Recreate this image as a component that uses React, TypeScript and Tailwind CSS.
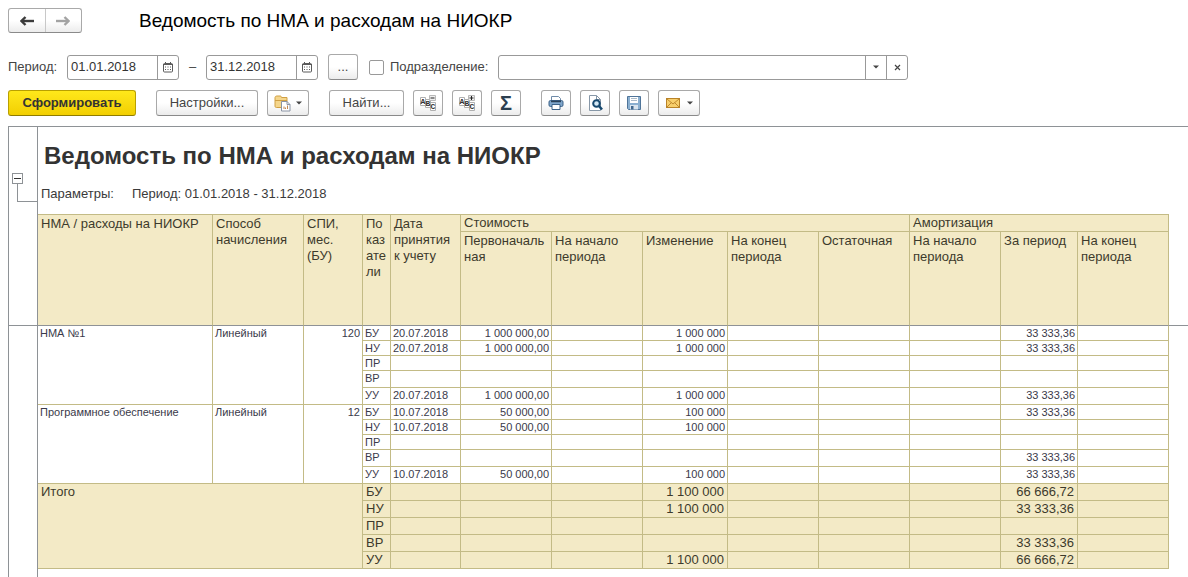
import type { ReactNode } from 'react';
import clsx from 'clsx';

type ReportRow = {
  code: string;
  date?: string;
  initial?: string;
  change?: string;
  period?: string;
};

type ReportGroup = {
  name: string;
  method: string;
  months: string;
  rows: ReportRow[];
};

const GROUPS: ReportGroup[] = [
  {
    name: 'НМА №1',
    method: 'Линейный',
    months: '120',
    rows: [
      { code: 'БУ', date: '20.07.2018', initial: '1 000 000,00', change: '1 000 000', period: '33 333,36' },
      { code: 'НУ', date: '20.07.2018', initial: '1 000 000,00', change: '1 000 000', period: '33 333,36' },
      { code: 'ПР' },
      { code: 'ВР' },
      { code: 'УУ', date: '20.07.2018', initial: '1 000 000,00', change: '1 000 000', period: '33 333,36' },
    ],
  },
  {
    name: 'Программное обеспечение',
    method: 'Линейный',
    months: '12',
    rows: [
      { code: 'БУ', date: '10.07.2018', initial: '50 000,00', change: '100 000', period: '33 333,36' },
      { code: 'НУ', date: '10.07.2018', initial: '50 000,00', change: '100 000' },
      { code: 'ПР' },
      { code: 'ВР', period: '33 333,36' },
      { code: 'УУ', date: '10.07.2018', initial: '50 000,00', change: '100 000', period: '33 333,36' },
    ],
  },
];

const TOTALS: ReportRow[] = [
  { code: 'БУ', change: '1 100 000', period: '66 666,72' },
  { code: 'НУ', change: '1 100 000', period: '33 333,36' },
  { code: 'ПР' },
  { code: 'ВР', period: '33 333,36' },
  { code: 'УУ', change: '1 100 000', period: '66 666,72' },
];

const CELL = 'border-r border-b border-[#c3bb86] px-0.5 align-top font-normal';
const HEAD = 'border-r border-b border-[#c3bb86] bg-[#f3eac6] px-[3px] align-top text-left font-normal';
const HEAD_LAST = 'border-b-[#8e9296] pt-px';
const GUTTER = 'border-r border-[#8e9296]';

function ToolButton({ label, className, children }: { label?: string; className?: string; children: ReactNode }) {
  return (
    <button
      type="button"
      aria-label={label}
      className={clsx(
        'flex h-[26px] shrink-0 items-center justify-center rounded-[3px] border border-[#a9a9a9] border-b-[#8a8a8a] bg-linear-to-b from-white from-50% to-[#ececec] text-[#444]',
        className,
      )}
    >
      {children}
    </button>
  );
}

function Caret() {
  return (
    <svg width="6" height="4" viewBox="0 0 6 4" fill="#444">
      <path d="M0 .5h6L3 3.5z" />
    </svg>
  );
}

function Arrow({ color, flip }: { color: string; flip?: boolean }) {
  return (
    <svg width="14" height="10" viewBox="0 0 14 10" className={clsx(flip && 'rotate-180')} fill="none" stroke={color}>
      <path d="M2 5h12" strokeWidth="2.4" />
      <path d="M5.5 1L1.5 5l4 4" strokeWidth="2.4" />
    </svg>
  );
}

function CalendarIcon() {
  return (
    <svg width="10" height="11" viewBox="0 0 10 11" fill="none" stroke="#5a5a5a">
      <rect x=".5" y="1.5" width="9" height="8.5" rx="1" />
      <path d="M0 2.5h10M2.5 0v2M7.5 0v2" />
      <path d="M2 5h1M4.500 5h1M7 5h1M2 7.500h1M4.500 7.500h1M7 7.500h1" strokeWidth="1.200" />
    </svg>
  );
}

function DateField({ label, value }: { label: string; value: string }) {
  return (
    <div className="flex h-[25px] w-28 rounded-[3px] border border-[#999] bg-white">
      <input
        aria-label={label}
        defaultValue={value}
        className="min-w-0 flex-1 pl-[3px] text-[13px] text-[#333] outline-none"
      />
      <button type="button" aria-label="Календарь" className="flex w-[21px] items-center justify-center border-l border-[#999]">
        <CalendarIcon />
      </button>
    </div>
  );
}

function VariantsIcon() {
  return (
    <svg width="17" height="17" viewBox="0 0 17 17" fill="none">
      <path d="M1 2.500c0-1 1-1.500 2-1.500h3c1 0 1.500.7 1.500 1.500H13v10H2.500c-1 0-1.500-.5-1.500-1.500z" fill="#f5d68c" stroke="#d0a044" />
      <path d="M1 5.500h12" stroke="#d0a044" />
      <path d="M7.500 6.500h5.500l3 3v6.500h-8.500z" fill="#fff" stroke="#8a93a3" />
      <path d="M13 6.500v3h3" stroke="#8a93a3" />
      <path d="M10 14v-2.500M11.500 14v-1.500M13.500 14v-3.500" stroke="#c2864e" />
    </svg>
  );
}

function AbcIcon({ plus }: { plus?: boolean }) {
  return (
    <svg width="16" height="16" viewBox="0 0 16 16" fill="none">
      <g fill="#fff" stroke="#b0b0b0">
        <path d="M.5 2.500h5v8h-5zM5.500 4.500h5v8h-5zM10.500 7.500h5v8h-5z" />
      </g>
      <g fill="#333" fontFamily="Liberation Mono, monospace" fontSize="8" fontWeight="700" textAnchor="middle">
        <text x="3" y="9">A</text>
        <text x="8" y="11">B</text>
        <text x="13" y="14">C</text>
      </g>
      <path d="M9.500.5h6v5h-6z" fill="#eee" stroke="#b8b8b8" />
      <path d={plus ? 'M10.500 3h4M12.500 1v4' : 'M10.500 3h4'} stroke="#222" />
    </svg>
  );
}

function PrinterIcon() {
  return (
    <svg width="16" height="14" viewBox="0 0 16 14" fill="none">
      <path d="M3.500 5V.5h7l2 2V5" fill="#fff" stroke="#6f8ba8" />
      <rect x="1" y="4.500" width="14" height="6" rx="1.500" fill="#7fa6cb" stroke="#3c6288" />
      <path d="M3 5.500h10" stroke="#2c4258" strokeWidth="1.500" />
      <path d="M4 8.500h8v5H4z" fill="#fff" stroke="#3c6288" />
    </svg>
  );
}

function PreviewIcon() {
  return (
    <svg width="16" height="16" viewBox="0 0 16 16" fill="none">
      <path d="M2.500.5h7l4 4v11h-11z" fill="#fff" stroke="#8797a7" />
      <path d="M9.500.5v4h4" stroke="#8797a7" />
      <circle cx="9.500" cy="8.500" r="3.300" fill="#d6e9f5" stroke="#17496f" strokeWidth="2" />
      <path d="M12 11l3 3.500" stroke="#17496f" strokeWidth="2.500" />
    </svg>
  );
}

function SaveIcon() {
  return (
    <svg width="14" height="14" viewBox="0 0 14 14" fill="none">
      <path d="M.5.5h13v13H1.500l-1-1z" fill="#8aafd0" stroke="#4f7499" />
      <path d="M3 1h8v6H3z" fill="#fff" />
      <path d="M4 2.500h6M4 4.500h6" stroke="#a9b9c8" />
      <path d="M3 9h8v4.500H3z" fill="#d9e4ee" />
      <path d="M4 10h2.500v3.500H4z" fill="#41688e" />
    </svg>
  );
}

function MailIcon() {
  return (
    <svg width="14" height="10" viewBox="0 0 14 10" fill="none" stroke="#b98328">
      <rect x=".5" y=".5" width="13" height="9" fill="#f8cf6c" />
      <path d="M1 1l6 5 6-5M1 9l4.500-4.500M13 9L8.500 4.500" stroke="#c08a2e" />
    </svg>
  );
}

function ValueCells({ row }: { row: ReportRow }) {
  return (
    <>
      <td className={CELL}>{row.code}</td>
      <td className={CELL}>{row.date}</td>
      <td className={clsx(CELL, 'text-right')}>{row.initial}</td>
      <td className={CELL} />
      <td className={clsx(CELL, 'text-right')}>{row.change}</td>
      <td className={CELL} />
      <td className={CELL} />
      <td className={CELL} />
      <td className={clsx(CELL, 'text-right')}>{row.period}</td>
      <td className={CELL} />
    </>
  );
}

function ReportTable() {
  return (
    <table className="w-full table-fixed border-separate border-spacing-0 text-[13px] text-[#3d3a2c]">
      <colgroup>
        <col className="w-[29px]" />
        <col className="w-[175px]" />
        <col className="w-[91px]" />
        <col className="w-[59px]" />
        <col className="w-[28px]" />
        <col className="w-[70px]" />
        <col className="w-[91px]" />
        <col className="w-[91px]" />
        <col className="w-[85px]" />
        <col className="w-[91px]" />
        <col className="w-[91px]" />
        <col className="w-[91px]" />
        <col className="w-[77px]" />
        <col className="w-[91px]" />
        <col />
      </colgroup>
      <thead className="leading-4">
        <tr className="h-[18px]">
          <td rowSpan={2} className={clsx(GUTTER, 'border-b')} />
          <th rowSpan={2} className={clsx(HEAD, HEAD_LAST, 'border-t')}>НМА / расходы на НИОКР</th>
          <th rowSpan={2} className={clsx(HEAD, HEAD_LAST, 'border-t')}>Способ начисления</th>
          <th rowSpan={2} className={clsx(HEAD, HEAD_LAST, 'border-t')}>СПИ, мес. (БУ)</th>
          <th rowSpan={2} className={clsx(HEAD, HEAD_LAST, 'border-t')}>По<br />каз<br />ате<br />ли</th>
          <th rowSpan={2} className={clsx(HEAD, HEAD_LAST, 'border-t')}>Дата принятия к учету</th>
          <th colSpan={5} className={clsx(HEAD, 'border-t')}>Стоимость</th>
          <th colSpan={3} className={clsx(HEAD, 'border-t')}>Амортизация</th>
          <td rowSpan={2} className="border-b border-[#8e9296]" />
        </tr>
        <tr className="h-[94px]">
          <th className={clsx(HEAD, HEAD_LAST)}>Первоначаль<br />ная</th>
          <th className={clsx(HEAD, HEAD_LAST)}>На начало периода</th>
          <th className={clsx(HEAD, HEAD_LAST)}>Изменение</th>
          <th className={clsx(HEAD, HEAD_LAST)}>На конец<br />периода</th>
          <th className={clsx(HEAD, HEAD_LAST)}>Остаточная</th>
          <th className={clsx(HEAD, HEAD_LAST)}>На начало периода</th>
          <th className={clsx(HEAD, HEAD_LAST)}>За период</th>
          <th className={clsx(HEAD, HEAD_LAST)}>На конец<br />периода</th>
        </tr>
      </thead>
      {GROUPS.map((group) => (
        <tbody key={group.name} className="text-[11px] leading-[14px] text-[#3a3a4a]">
          {group.rows.map((row, i) => (
            <tr key={row.code} className={i < 3 ? 'h-[15px]' : 'h-[17px]'}>
              {i === 0 && (
                <>
                  <td rowSpan={5} className={GUTTER} />
                  <td rowSpan={5} className={CELL}>{group.name}</td>
                  <td rowSpan={5} className={CELL}>{group.method}</td>
                  <td rowSpan={5} className={clsx(CELL, 'text-right')}>{group.months}</td>
                </>
              )}
              <ValueCells row={row} />
            </tr>
          ))}
        </tbody>
      ))}
      <tfoot className="leading-4">
        {TOTALS.map((row, i) => (
          <tr key={row.code} className="h-[17px] bg-[#f3eac6] [&>td]:px-[3px]">
            <td className={clsx(GUTTER, 'bg-white')} />
            {i === 0 && (
              <td rowSpan={5} colSpan={3} className={clsx(CELL, 'bg-[#f3eac6]')}>
                Итого
              </td>
            )}
            <ValueCells row={row} />
            <td className="bg-white" />
          </tr>
        ))}
      </tfoot>
    </table>
  );
}

export default function App() {
  return (
    <main className="flex min-h-screen flex-col bg-white pt-2 pl-2 font-['Liberation_Sans',Arial,sans-serif] text-[13px] text-[#444]">
      {/* Navigation and page title */}
      <header className="flex h-[25px] items-center gap-[57px]">
        <div className="flex h-[25px] w-[74px] rounded-[3px] border border-[#a9a9a9] border-b-[#8a8a8a] bg-linear-to-b from-white from-50% to-[#ececec]">
          <button type="button" aria-label="Назад" className="flex flex-1 items-center justify-center border-r border-[#c8c8c8]">
            <Arrow color="#3c3c3c" />
          </button>
          <button type="button" aria-label="Вперед" className="flex flex-1 items-center justify-center">
            <Arrow color="#a3a3a3" flip />
          </button>
        </div>
        <h1 className="text-[19px] leading-6 text-black">Ведомость по НМА и расходам на НИОКР</h1>
      </header>

      {/* Period and department filters */}
      <div className="mt-[21px] flex h-[26px] items-center">
        <span className="w-[59px]">Период:</span>
        <DateField label="Начало периода" value="01.01.2018" />
        <span className="w-[27px] text-center">–</span>
        <DateField label="Конец периода" value="31.12.2018" />
        <ToolButton label="Выбрать период" className="ml-2.5 w-[30px]">...</ToolButton>
        <input
          id="department-on"
          type="checkbox"
          className="ml-[11px] size-[15px] appearance-none rounded-[2px] border border-[#999] bg-white"
        />
        <label htmlFor="department-on" className="ml-1.5 w-[108px]">Подразделение:</label>
        <div className="flex h-[25px] w-[410px] rounded-[3px] border border-[#999] bg-white">
          <input aria-label="Подразделение" className="min-w-0 flex-1 px-1 outline-none" />
          <button type="button" aria-label="Открыть список" className="flex w-[21px] items-center justify-center border-l border-[#999]">
            <Caret />
          </button>
          <button type="button" aria-label="Очистить" className="flex w-[21px] items-center justify-center border-l border-[#999]">
            <svg width="7" height="7" viewBox="0 0 7 7" stroke="#444" strokeWidth="1.200">
              <path d="M1 1l5 5M6 1L1 6" />
            </svg>
          </button>
        </div>
      </div>

      {/* Toolbar */}
      <div className="mt-2.5 flex gap-5">
        <button
          type="button"
          className="h-[26px] w-32 rounded-[3px] border border-[#b9a000] border-b-[#8f7c00] bg-linear-to-b from-[#ffe81a] to-[#f2cf00] text-[13px] font-bold text-[#333]"
        >
          Сформировать
        </button>
        <div className="flex gap-[9px]">
          <ToolButton className="w-[102px]">Настройки...</ToolButton>
          <ToolButton label="Варианты отчета" className="w-[42px] gap-[5px]">
            <VariantsIcon />
            <Caret />
          </ToolButton>
        </div>
        <div className="flex gap-[9px]">
          <ToolButton className="w-[75px]">Найти...</ToolButton>
          <ToolButton label="Свернуть группы" className="w-[30px]">
            <AbcIcon />
          </ToolButton>
          <ToolButton label="Развернуть группы" className="w-[30px]">
            <AbcIcon plus />
          </ToolButton>
          <ToolButton label="Сумма" className="w-[30px]">
            <span className="text-xl leading-5 font-bold text-[#2b3f50]">Σ</span>
          </ToolButton>
        </div>
        <div className="flex gap-[9px]">
          <ToolButton label="Печать" className="w-[30px]">
            <PrinterIcon />
          </ToolButton>
          <ToolButton label="Предварительный просмотр" className="w-[30px]">
            <PreviewIcon />
          </ToolButton>
          <ToolButton label="Сохранить" className="w-[30px]">
            <SaveIcon />
          </ToolButton>
          <ToolButton label="Отправить" className="w-[42px] gap-[7px]">
            <MailIcon />
            <Caret />
          </ToolButton>
        </div>
      </div>

      {/* Report sheet */}
      <section className="mt-2.5 flex flex-1 flex-col overflow-x-auto border-t border-l border-[#8e9296]">
        <div className="flex h-[87px]">
          <div className={clsx(GUTTER, 'flex w-[29px] flex-col pt-[46px] pl-[3px]')}>
            <button type="button" aria-label="Свернуть" className="flex size-[11px] items-center justify-center border border-[#8e9296]">
              <span className="h-px w-[7px] bg-[#333]" />
            </button>
            <div className="ml-[5px] h-[18px] border-b border-l border-[#8e9296]" />
          </div>
          <div className="flex flex-col pt-[15px] pl-[3px]">
            <h2 className="pl-[3px] text-2xl leading-7 font-bold text-[#333]">Ведомость по НМА и расходам на НИОКР</h2>
            <p className="mt-4 flex gap-[18px] leading-4 text-[#3a3a3a]">
              <span>Параметры:</span>
              <span>Период: 01.01.2018 - 31.12.2018</span>
            </p>
          </div>
        </div>
        <ReportTable />
        <div className={clsx(GUTTER, 'w-[29px] flex-1')} />
      </section>
    </main>
  );
}
